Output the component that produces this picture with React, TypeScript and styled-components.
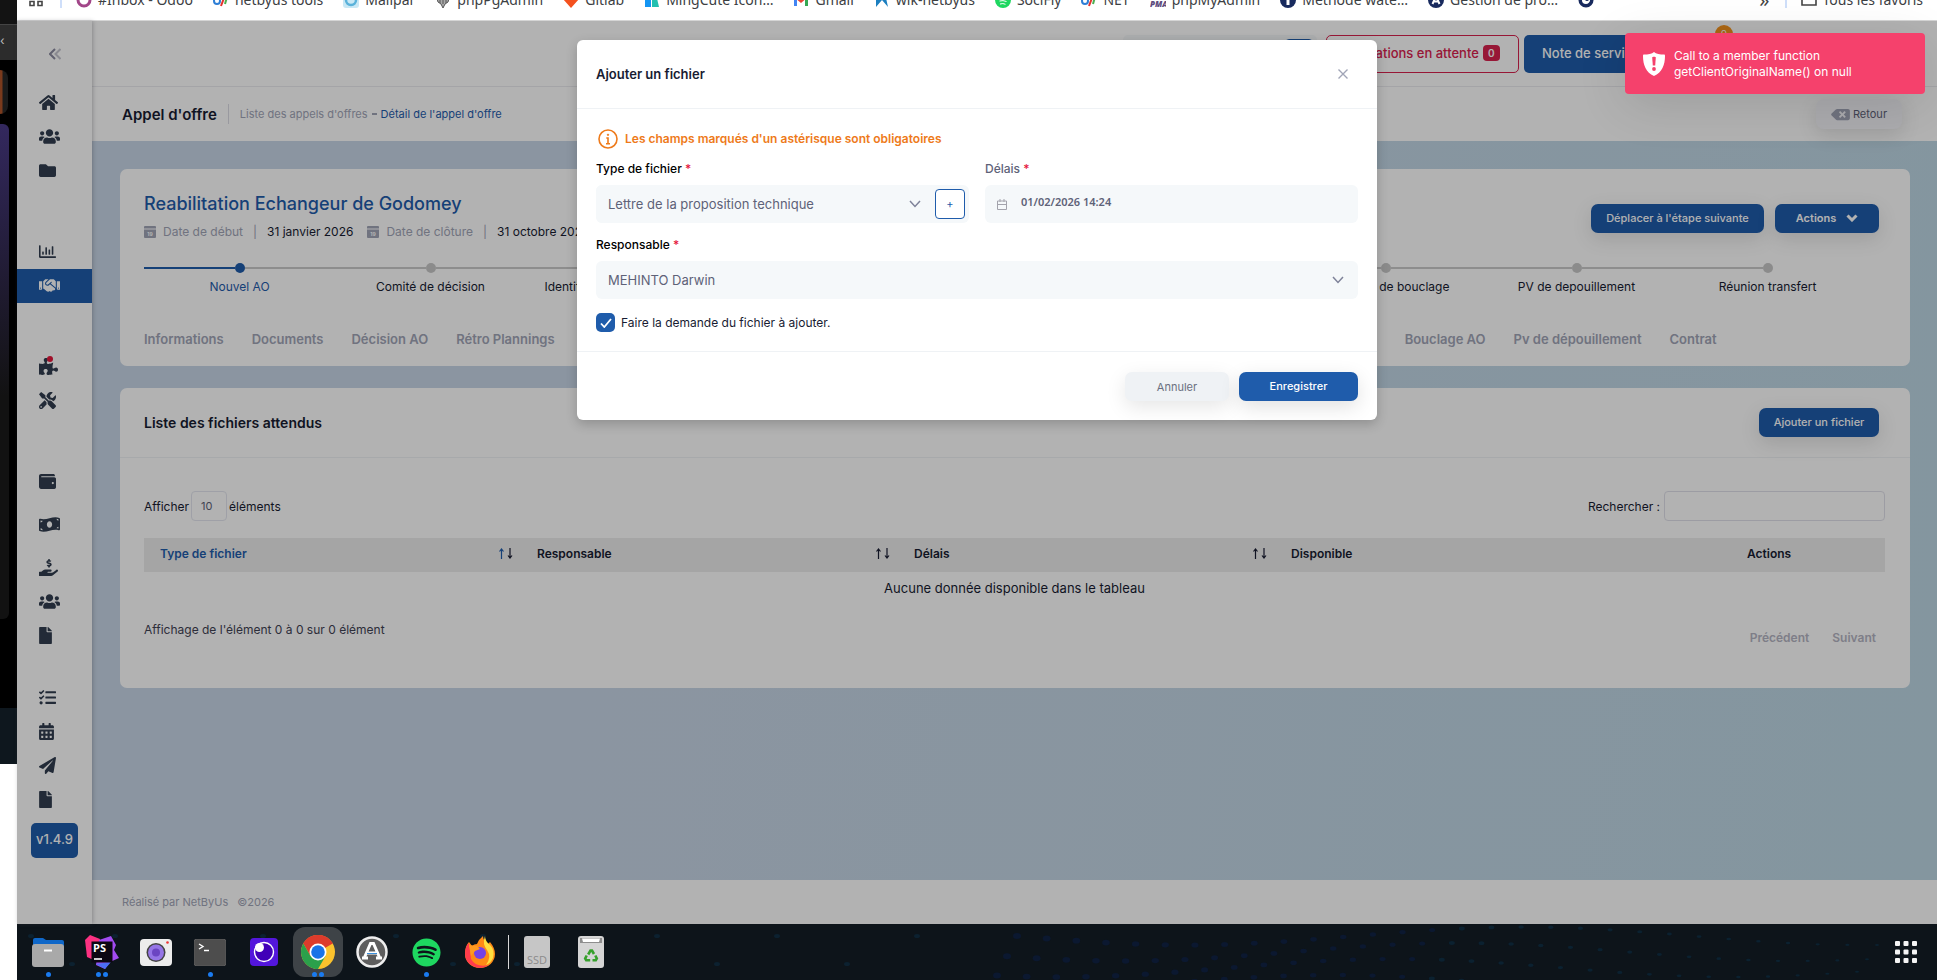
import React, { useState } from 'react'
import styled, { createGlobalStyle, css } from 'styled-components'
import {
  FaHome, FaUsers, FaFolder, FaRegChartBar, FaHandshake, FaPuzzlePiece, FaTools, FaWallet, FaMoneyBillWave,
  FaHandHoldingUsd, FaFile, FaTasks, FaCalendarAlt, FaPaperPlane, FaBackspace, FaSpotify
} from 'react-icons/fa'

const GlobalStyle = createGlobalStyle`
  * { box-sizing: border-box; }
  body {
    margin: 0;
    background: #fff;
    color: #181c32;
    font-family: Inter, 'Open Sans', sans-serif;
    font-size: 12px;
  }
  button, input, select { font-family: inherit; }
  svg { flex: none; display: block; }
`

const BLUE = '#1f5cab'

// w: icon width for a 17px height
const menu = [
  [
    { icon: FaHome, label: 'Accueil', w: 19 },
    { icon: FaUsers, label: 'Clients', w: 21 },
    { icon: FaFolder, label: 'Projets', w: 17 }
  ],
  [
    { icon: FaRegChartBar, label: 'Statistiques', w: 17 },
    { icon: FaHandshake, label: "Appels d'offres", w: 21, active: true }
  ],
  [
    { icon: FaPuzzlePiece, label: 'Modules', w: 19, alert: true },
    { icon: FaTools, label: 'Outils', w: 17 }
  ],
  [
    { icon: FaWallet, label: 'Caisse', w: 17 },
    { icon: FaMoneyBillWave, label: 'Paiements', w: 21, tall: true },
    { icon: FaHandHoldingUsd, label: 'Prêts', w: 19 },
    { icon: FaUsers, label: 'Personnel', w: 21 },
    { icon: FaFile, label: 'Rapports', w: 13 }
  ],
  [
    { icon: FaTasks, label: 'Tâches', w: 17 },
    { icon: FaCalendarAlt, label: 'Agenda', w: 15 },
    { icon: FaPaperPlane, label: 'Missions', w: 17 },
    { icon: FaFile, label: 'Fichiers', w: 13 }
  ]
]

const steps = [
  'Nouvel AO', 'Comité de décision', 'Identification des membres', 'Rétro planning', 'Elaboration', 'Vérification',
  'Demande de bouclage', 'PV de depouillement', 'Réunion transfert'
]

const leftTabs = ['Informations', 'Documents', 'Décision AO', 'Rétro Plannings']
const rightTabs = ['Bouclage AO', 'Pv de dépouillement', 'Contrat']

const bookmarks = [
  { name: '#Inbox - Odoo', icon: 'odoo' }, { name: 'netbyus tools', icon: 'net' }, { name: 'Mailpar', icon: 'mail' },
  { name: 'phpPgAdmin', icon: 'pg' }, { name: 'Gitlab', icon: 'gitlab' }, { name: 'MingCute Icon…', icon: 'ming' },
  { name: 'Gmail', icon: 'gmail' }, { name: 'wik-netbyus', icon: 'wik' }, { name: 'SociFly', icon: 'soci' },
  { name: 'NET', icon: 'net' }, { name: 'phpMyAdmin', icon: 'pma' }, { name: 'Méthode wate…', icon: 'navy' },
  { name: 'Gestion de pro…', icon: 'navyA' }, { name: '', icon: 'navyC' }
]

export default function App(): React.ReactElement {
  const [checked, setChecked] = useState(true)

  return (
    <Desktop>
      <GlobalStyle />
      <BackWindow>
        <BackTop />
        <BackTab>‹</BackTab>
        <BackBody>
          <Avatar />
          <Artwork />
        </BackBody>
        <BackBottom />
        <BackBlank />
      </BackWindow>

      <Front>
        <Bookmarks>
          <Favicon name="apps" />
          <BarRule />
          {bookmarks.map((b, i) => (
            <Bookmark key={i} href="#"><Favicon name={b.icon} />{b.name}</Bookmark>
          ))}
          <More>»</More>
          <BarRule />
          <Bookmark href="#"><Favicon name="folder" />Tous les favoris</Bookmark>
        </Bookmarks>

        <Viewport>
          <Sidebar>
            <Collapse aria-label="Réduire le menu">
              <svg width="12" height="12" viewBox="0 0 12 12" fill="none" stroke="#8a8aa0" strokeWidth="2">
                <path d="M6 1 1 6l5 5" />
                <path d="M11.500 1l-5 5 5 5" opacity=".5" />
              </svg>
            </Collapse>
            {menu.map((group, i) => (
              <MenuGroup key={i} $first={i === 0} $close={i === 4}>
                {group.map((item: any) => (
                  <MenuLink
                    key={item.label}
                    href="#"
                    aria-label={item.label}
                    $icon={item.w}
                    $active={item.active}
                    $tall={item.tall}
                  >
                    <item.icon />
                    {item.alert && <AlertDot />}
                  </MenuLink>
                ))}
              </MenuGroup>
            ))}
            <Version>v1.4.9</Version>
          </Sidebar>

          <Page>
            <TopBar>
              <SearchBox><SearchButton aria-label="Rechercher" /></SearchBox>
              <PendingButton>Validations en attente <Count>0</Count></PendingButton>
              <NoteButton>Note de service</NoteButton>
              <Notif>0</Notif>
            </TopBar>
            <SubBar>
              <PageTitle>Appel d'offre</PageTitle>
              <TitleRule />
              <Crumb href="#">Liste des appels d'offres</Crumb>
              <CrumbDash />
              <Crumb href="#" $current>Détail de l'appel d'offre</Crumb>
              <BackButton><FaBackspace />Retour</BackButton>
            </SubBar>

            <Content>
              <Card>
                <OfferHead>
                  <div>
                    <OfferTitle>Reabilitation Echangeur de Godomey</OfferTitle>
                    <Dates>
                      <DayIcon /><span>Date de début</span><i>|</i><b>31 janvier 2026</b>
                      <DayIcon /><span>Date de clôture</span><i>|</i><b>31 octobre 2026</b>
                    </Dates>
                  </div>
                  <Actions>
                    <PrimaryButton $width={173}>Déplacer à l'étape suivante</PrimaryButton>
                    <PrimaryButton $width={104} $bold>
                      Actions
                      <svg width="12" height="8" viewBox="0 0 12 8" fill="none" stroke="#fff" strokeWidth="3">
                        <path d="M1.500 1.500 6 6l4.500-4.500" />
                      </svg>
                    </PrimaryButton>
                  </Actions>
                </OfferHead>
                <Steps>
                  {steps.map((s, i) => (
                    <Step key={s} $active={i === 0}>
                      <Marker>
                        <Segment $active={i === 0} />
                        <Dot $active={i === 0} />
                        <Segment $hidden={i === steps.length - 1} />
                      </Marker>
                      {s}
                    </Step>
                  ))}
                </Steps>
                <Tabs>
                  {leftTabs.map(t => <Tab key={t} href="#">{t}</Tab>)}
                  <TabGroup>
                    <Tab href="#">Offre technique</Tab>
                    <Tab href="#">Offre financière</Tab>
                  </TabGroup>
                  {rightTabs.map(t => <Tab key={t} href="#">{t}</Tab>)}
                </Tabs>
              </Card>

              <Card>
                <ListHead>
                  <ListTitle>Liste des fichiers attendus</ListTitle>
                  <PrimaryButton $width={120}>Ajouter un fichier</PrimaryButton>
                </ListHead>
                <ListBody>
                  <Controls>
                    <label>
                      Afficher
                      <LengthSelect defaultValue="10"><option>10</option><option>25</option></LengthSelect>
                      éléments
                    </label>
                    <label>Rechercher :<SearchInput type="search" /></label>
                  </Controls>
                  <Table>
                    <colgroup>
                      <col width="377" /><col width="377" /><col width="377" /><col width="456" /><col />
                    </colgroup>
                    <thead>
                      <tr>
                        {['Type de fichier', 'Responsable', 'Délais', 'Disponible', 'Actions'].map((h, i) => (
                          <Th key={h} $sorted={i === 0}>
                            <ThInner>
                              {h}
                              {i < 3 && <SortArrows />}
                            </ThInner>
                          </Th>
                        ))}
                      </tr>
                    </thead>
                    <tbody>
                      <tr><Empty colSpan={5}>Aucune donnée disponible dans le tableau</Empty></tr>
                    </tbody>
                  </Table>
                  <ListFoot>
                    <span>Affichage de l'élément 0 à 0 sur 0 élément</span>
                    <Pager><button disabled>Précédent</button><button disabled>Suivant</button></Pager>
                  </ListFoot>
                </ListBody>
              </Card>
            </Content>

            <Footer><span>Réalisé par NetByUs</span><span>©2026</span></Footer>
          </Page>

          <Backdrop>
            <Modal role="dialog" aria-labelledby="modal-title">
              <ModalHead>
                <ModalTitle id="modal-title">Ajouter un fichier</ModalTitle>
                <Close aria-label="Fermer">
                  <svg width="10" height="10" viewBox="0 0 10 10" stroke="#a1a5b7" strokeWidth="1.400">
                    <path d="M.5.5l9 9M9.500.5l-9 9" />
                  </svg>
                </Close>
              </ModalHead>
              <ModalBody>
                <Notice>
                  <svg width="20" height="20" viewBox="0 0 20 20" fill="none" stroke="#ee7a1a" strokeWidth="1.600">
                    <circle cx="10" cy="10" r="9" />
                    <circle cx="10" cy="5.800" r=".7" fill="#ee7a1a" strokeWidth="1" />
                    <path d="M8.300 9H10v5.500M8 14.800h4" />
                  </svg>
                  Les champs marqués d'un astérisque sont obligatoires
                </Notice>
                <Columns>
                  <div>
                    <Label htmlFor="type">Type de fichier <Star>*</Star></Label>
                    <InputGroup>
                      <Field>
                        <Select id="type"><option>Lettre de la proposition technique</option></Select>
                        <Chevron />
                      </Field>
                      <AddButton aria-label="Ajouter un type">+</AddButton>
                    </InputGroup>
                  </div>
                  <div>
                    <Label htmlFor="delai" $muted>Délais <Star>*</Star></Label>
                    <Field>
                      <svg width="10" height="11" viewBox="0 0 10 11" fill="none" stroke="#a3a3ac">
                        <path d="M.5 2h9v8.500h-9zM.5 5.500h9M3 0v3M7 0v3" />
                      </svg>
                      <DateInput id="delai" type="text" defaultValue="01/02/2026 14:24" />
                    </Field>
                  </div>
                </Columns>
                <Label htmlFor="resp">Responsable <Star>*</Star></Label>
                <Field>
                  <Select id="resp"><option>MEHINTO Darwin</option></Select>
                  <Chevron />
                </Field>
                <CheckLabel>
                  <CheckStack>
                    <CheckBox type="checkbox" checked={checked} onChange={e => setChecked(e.target.checked)} />
                    <svg width="12" height="10" viewBox="0 0 12 10" fill="none" stroke="#fff" strokeWidth="1.800">
                      <path d="M1 5.500 4.300 9 11 1" />
                    </svg>
                  </CheckStack>
                  Faire la demande du fichier à ajouter.
                </CheckLabel>
              </ModalBody>
              <ModalFoot>
                <CancelButton>Annuler</CancelButton>
                <PrimaryButton $width={119}>Enregistrer</PrimaryButton>
              </ModalFoot>
            </Modal>
          </Backdrop>

          <Toast role="alert">
            <svg width="22" height="24" viewBox="0 0 22 24">
              <path
                fill="#fff"
                d="M11 0c2 2 6 2.500 10 2.500.9 0 1 .6 1 1.500 0 9-3 16.500-11 20C3 20.500 0 13 0 4c0-.9.1-1.500 1-1.500C5 2.500 9 2 11 0z"
              />
              <path fill="#f5416c" d="M9.200 5.500c0-1 3.600-1 3.600 0l-.6 8h-2.400z" />
              <circle cx="11" cy="17" r="1.900" fill="#f5416c" />
            </svg>
            <span>Call to a member function getClientOriginalName() on null</span>
          </Toast>
        </Viewport>

        <Dock>
          <DockDots />
          {dockApps.map(app => (
            <DockItem key={app.name} aria-label={app.name} $active={app.name === 'Chrome'}>
              {app.icon}
              <Running>{Array.from({ length: app.running }, (_, i) => <i key={i} />)}</Running>
            </DockItem>
          ))}
          <DockRule />
          <DockItem aria-label="SSD">
            <svg width="26" height="32" viewBox="0 0 26 32">
              <rect width="26" height="32" rx="3" fill="#c6c6c6" />
              <text x="13" y="28" textAnchor="middle" fontSize="11" fill="#8b8b8b" fontFamily="Open Sans">SSD</text>
            </svg>
          </DockItem>
          <DockItem aria-label="Corbeille">
            <svg width="26" height="32" viewBox="0 0 26 32">
              <rect width="26" height="32" rx="3" fill="#d5d5d5" />
              <path d="M2 2h22v5H2z" fill="#8e8e8e" />
              <path d="M4 2.500h18l-1 3.500H5z" fill="#fff" />
              <g fill="none" stroke="#36a02c" strokeWidth="2.600">
                <path d="M10.200 18.500l2.300-4h1.500l2 3.500" />
                <path d="M17.300 19.500l1.500 3-1 1.700h-3.300" />
                <path d="M8.700 19.500l-1.500 3 1 1.700h4" />
              </g>
            </svg>
          </DockItem>
          <AppsButton aria-label="Applications">
            <svg width="22" height="22" viewBox="0 0 22 22" fill="#f4f4f4">
              {[0, 1, 2].map(r => [0, 1, 2].map(c => (
                <rect key={`${r}${c}`} x={c * 8.5} y={r * 8.5} width="5" height="5" rx="1" />
              )))}
            </svg>
          </AppsButton>
        </Dock>
      </Front>
    </Desktop>
  )
}

function Chevron() {
  return (
    <svg width="12" height="8" viewBox="0 0 12 8" fill="none" stroke="#7e8299" strokeWidth="1.500">
      <path d="M1 1l5 5.500L11 1" />
    </svg>
  )
}

function DayIcon() {
  return (
    <svg width="12" height="12" viewBox="0 0 12 12" fill="#a1a5b7">
      <path d="M1 0h10q1 0 1 1v1.500H0V1q0-1 1-1zM0 3.500h12V11q0 1-1 1H1q-1 0-1-1z" />
      <text x="6" y="9.500" fontSize="5" fontWeight="700" textAnchor="middle" fill="#fff">19</text>
    </svg>
  )
}

function SortArrows() {
  return (
    <svg width="14" height="11" viewBox="0 0 14 11" fill="none" stroke="currentColor" strokeWidth="1.200">
      <path d="M2.500 11V1.500M.5 3.500l2-2.500 2 2.500" />
      <path d="M11 0v9.500M9 7.500l2 2.500 2-2.500" stroke="#181c32" />
    </svg>
  )
}

function Favicon({ name }: { name: string }) {
  const shapes: Record<string, React.ReactNode> = {
    apps: <path d="M1 1h4v4H1zM9 1h4v4H9zM1 9.500h4v4H1zM9 9.500h4v4H9z" fill="none" stroke="#444" strokeWidth="1.600" />,
    odoo: <circle cx="8" cy="8" r="6" fill="none" stroke="#a24689" strokeWidth="3" />,
    net: (
      <g fill="none" strokeWidth="2">
        <path d="M1 9a3 3 0 106 0 3 3 0 10-6 0M8 6h3" stroke="#2f7fd6" />
        <path d="M8 14l3-8" stroke="#e5322d" /><path d="M12 12l2-7" stroke="#4caf50" />
      </g>
    ),
    mail: (
      <g>
        <rect width="16" height="16" rx="3" fill="#c9e8f5" />
        <circle cx="8" cy="8" r="5" fill="none" stroke="#5ab2da" strokeWidth="2.500" />
      </g>
    ),
    pg: <path d="M1 3h14l-2 7-3 2-2 4-2-4-3-2z M5 4v7M8 4v8M11 4v7" fill="#aaa" stroke="#555" />,
    gitlab: <path d="M0 7l2-6 2 5h8l2-5 2 6-8 9z" fill="#f4511e" />,
    ming: <g><path d="M1 15V4l6 3v8z" fill="#1495f3" /><path d="M8 15V7l4-5 3 13z" fill="#22c0b0" /></g>,
    gmail: (
      <g fill="none" strokeWidth="3">
        <path d="M2.500 14V3" stroke="#4285f4" /><path d="M2 4l6 5 6-5" stroke="#ea4335" />
        <path d="M13.500 14V3" stroke="#34a853" />
      </g>
    ),
    wik: <path d="M2 15l6-7 6 7-2-9-10-1z" fill="#1c7fc0" />,
    soci: (
      <g>
        <circle cx="8" cy="8" r="8" fill="#1ed760" />
        <path d="M4 6q4-1.500 8 .5M4.500 9q3.500-1 7 .5M5 12q3-1 5.500.3" stroke="#fff" fill="none" />
      </g>
    ),
    pma: (
      <g>
        <path d="M2 8l3-4 2 4zM9 8l2-5 3 5z" fill="#f89c0e" />
        <text x="0" y="15" fontSize="8" fontWeight="900" fontStyle="italic" fill="#5c4a7d" fontFamily="Open Sans">
          PMA
        </text>
      </g>
    ),
    navy: <g><circle cx="8" cy="8" r="8" fill="#182a5e" /><path d="M8 5v8" stroke="#fff" strokeWidth="3" /></g>,
    navyA: (
      <g>
        <circle cx="8" cy="8" r="8" fill="#182a5e" />
        <path d="M4.500 12L8 4l3.500 8M6 9.500h4" stroke="#fff" strokeWidth="2" fill="none" />
      </g>
    ),
    navyC: (
      <g>
        <circle cx="8" cy="8" r="5.800" fill="none" stroke="#182a5e" strokeWidth="3.500" />
        <circle cx="9" cy="7" r="2" fill="#182a5e" />
      </g>
    ),
    folder: <path d="M1 3h6l1 2h7v8H1z" fill="none" stroke="#444" strokeWidth="1.600" />
  }
  return <svg width="16" height="16" viewBox="0 0 16 16">{shapes[name]}</svg>
}

// Wallpaper pattern that shows through the dock
function DockDots() {
  const rows = []
  for (let r = 0; r < 4; r++) {
    for (let i = 0; i < 30; i++) {
      const t = i / 29
      rows.push(
        <ellipse
          key={`${r}-${i}`}
          cx={1000 + t * 860 - r * 10}
          cy={12 + r * 16 + Math.sin(t * 8 + r * 0.5) * 9}
          rx={4 - t * 2}
          ry={3 - t * 2}
          fill={t < 0.5 ? '#0b1830' : '#0b2130'}
        />
      )
    }
  }
  return (
    <Dots viewBox="0 0 1920 56" preserveAspectRatio="xMinYMin slice" aria-hidden>
      {rows}
      {[14, 55, 98, 188, 246, 318, 379, 436, 466, 500, 640, 700, 760, 830, 900].map((x, i) => (
        <ellipse key={x} cx={x} cy={i % 2 ? 40 : 12} rx="3" ry="2" fill="#0c2130" />
      ))}
    </Dots>
  )
}

const dockApps = [
  {
    name: 'Fichiers',
    running: 1,
    icon: (
      <svg width="32" height="30" viewBox="0 0 32 30">
        <path d="M1 3q0-2 2-2h8l3 2h16q2 0 2 2v8H1z" fill="#0f67c8" />
        <rect y="7" width="32" height="23" rx="3" fill="#a9a9a9" />
        <path d="M12 13.500h8" stroke="#fff" strokeWidth="2" />
      </svg>
    )
  },
  {
    name: 'PhpStorm',
    running: 2,
    icon: (
      <svg width="34" height="34" viewBox="0 0 34 34">
        <path d="M0 5L5 0l10 4-4 22-9-4z" fill="#fc3181" />
        <path d="M14 5l12-4 5 9-2 5 5 8-9 4-5 7-9-4z" fill="#a24bf0" />
        <path d="M11 29l9 5 6-7z" fill="#4c6ef5" />
        <rect x="6.500" y="6.500" width="21" height="21" fill="#0c0712" />
        <text x="8" y="17" fontSize="11" fontWeight="700" fill="#fff" fontFamily="Open Sans">PS</text>
        <path d="M9 24h8" stroke="#fff" strokeWidth="1.600" />
      </svg>
    )
  },
  {
    name: 'Capture',
    running: 0,
    icon: (
      <svg width="32" height="27" viewBox="0 0 32 27">
        <rect width="32" height="27" rx="4" fill="#ececec" />
        <circle cx="16" cy="13.500" r="9.500" fill="#444" />
        <circle cx="16" cy="13.500" r="8" fill="#9575e6" />
        <circle cx="16" cy="13.500" r="4" fill="#6b45c2" />
        <circle cx="27.500" cy="3.500" r="1.300" fill="#e33" />
      </svg>
    )
  },
  {
    name: 'Terminal',
    running: 1,
    icon: (
      <svg width="32" height="27" viewBox="0 0 32 27">
        <rect width="32" height="27" rx="3" fill="#4d4d4d" stroke="#5c5c5c" />
        <path d="M5 5l4 2.500L5 10M10 11.500h5" fill="none" stroke="#fff" strokeWidth="1.400" />
      </svg>
    )
  },
  {
    name: 'Insomnia',
    running: 0,
    icon: (
      <svg width="28" height="28" viewBox="0 0 28 28">
        <rect width="28" height="28" rx="4" fill="#5316dc" />
        <circle cx="14" cy="14" r="9.500" fill="#4100b8" stroke="#fff" strokeWidth="1.400" />
        <circle cx="9.500" cy="9.500" r="4.500" fill="#fff" />
      </svg>
    )
  },
  {
    name: 'Chrome',
    running: 2,
    icon: (
      <svg width="34" height="34" viewBox="0 0 34 34">
        <circle cx="17" cy="17" r="17" fill="#fbc22d" />
        <path d="M17 17L2.300 8.500A17 17 0 0131.700 8.500z" fill="#dd3b2c" />
        <path d="M17 8.500h14.700A17 17 0 002.300 8.500L9.600 21.300z" fill="#dd3b2c" />
        <path d="M2.300 8.500A17 17 0 0017 34l7.400-12.700H9.600z" fill="#2ba04b" />
        <circle cx="17" cy="17" r="8.500" fill="#fff" />
        <circle cx="17" cy="17" r="6.800" fill="#1a73e8" />
      </svg>
    )
  },
  {
    name: 'AppImage',
    running: 0,
    icon: (
      <svg width="32" height="32" viewBox="0 0 32 32" fill="none">
        <circle cx="16" cy="16" r="14.500" fill="#5e5e5e" stroke="#eee" strokeWidth="2.500" />
        <path d="M8 22.500L14.500 7.500h3L24 22.500M6 22h6M20 22h6M10 17h12" stroke="#fff" strokeWidth="3" />
        <path d="M11 17.500h10" stroke="#3a8fdc" />
      </svg>
    )
  },
  { name: 'Spotify', running: 1, icon: <FaSpotify size={29} color="#1ed760" /> },
  {
    name: 'Firefox',
    running: 0,
    icon: (
      <svg width="30" height="32" viewBox="0 0 30 32">
        <path
          d="M4 6l3 4q2-2 5-2 2-5 6-8 0 5 5 8l2-2q5 6 5 12a15 14 0 01-30 0Q0 10 4 6z"
          fill="#ff8a16"
        />
        <path d="M20 0q0 5 5 9 5 5 3 13-2 5-7 7 6-8 1-15-5-6-2-14z" fill="#ffdf3f" />
        <path d="M0 18a15 14 0 0024 11q-13 3-18-6L4 7Q0 10 0 18z" fill="#ff3b4c" />
        <circle cx="15" cy="17" r="6" fill="#7542e5" />
        <path d="M4 9l8 1 3 3-5 2-4 5z" fill="#ff9a1f" />
      </svg>
    )
  }
]

/* ---- desktop ---- */

const Desktop = styled.div`
  display: flex;
  min-height: 100vh;
`

const BackWindow = styled.div`
  width: 17px;
  flex: none;
  display: flex;
  flex-direction: column;
  background: #000;
  overflow: hidden;
`

const BackTop = styled.div`
  height: 24px;
  background: #131313;
`

const BackTab = styled.div`
  height: 36px;
  background: #2c2c2c;
  border-top: 1px solid #444;
  color: #bbb;
  line-height: 32px;
`

const BackBody = styled.div`
  height: 648px;
  padding-top: 10px;
`

const Avatar = styled.div`
  width: 8px;
  height: 44px;
  border-radius: 0 22px 22px 0;
  background: linear-gradient(to right, #7a3a1c 2px, #1b1b1b 3px);
`

const Artwork = styled.div`
  width: 9px;
  height: 495px;
  margin-top: 10px;
  border-radius: 0 6px 6px 0;
  background: linear-gradient(#33285e, #121212 55%);
`

const BackBottom = styled.div`
  height: 56px;
  background: #0e171e;
`

const BackBlank = styled.div`
  flex: 1;
  background: #fff;
`

const Front = styled.div`
  flex: 1;
  min-width: 0;
  display: flex;
  flex-direction: column;
`

const Bookmarks = styled.nav`
  height: 21px;
  display: flex;
  align-items: flex-start;
  gap: 20px;
  padding: 0 14px 0 12px;
  border-bottom: 1px solid #d5d5d5;
  overflow: hidden;
  svg { margin-top: -8px; }
`

const Bookmark = styled.a`
  display: flex;
  gap: 6px;
  color: #3c4043;
  font: 14px/0 'Noto Sans', sans-serif;
  white-space: nowrap;
  text-decoration: none;
`

const BarRule = styled.span`
  width: 2px;
  height: 8px;
  margin: 0 -6px 0 -5px;
  background: #cfdffa;
`

const More = styled.span`
  margin-left: auto;
  font: 20px/0 'Noto Sans', sans-serif;
  color: #444;
`

/* ---- page shell ---- */

const Viewport = styled.div`
  position: relative;
  flex: 1;
  display: flex;
`

const Sidebar = styled.aside`
  width: 75px;
  flex: none;
  background: #fff;
  box-shadow: 1px 0 4px rgba(60, 60, 70, 0.3);
  z-index: 1;
`

const Collapse = styled.button`
  display: flex;
  align-items: center;
  justify-content: center;
  width: 100%;
  height: 65px;
  border: 0;
  background: none;
`

const MenuGroup = styled.div<{ $first?: boolean; $close?: boolean }>`
  margin-top: ${p => (p.$first ? 0 : p.$close ? 28 : 47)}px;
`

const MenuLink = styled.a<{ $icon: number; $active?: boolean; $tall?: boolean }>`
  display: flex;
  align-items: center;
  height: ${p => (p.$tall ? 52 : 34)}px;
  padding: 0 0 2px 22px;
  color: ${p => (p.$active ? '#fff' : '#313d4f')};
  background: ${p => (p.$active ? BLUE : 'none')};
  position: relative;
  svg { height: 17px; width: ${p => p.$icon}px; }
`

const AlertDot = styled.span`
  position: absolute;
  left: 30px;
  top: 6px;
  width: 6px;
  height: 6px;
  border-radius: 50%;
  background: #e5173c;
`

const Version = styled.div`
  width: 47px;
  height: 35px;
  margin: 6px 0 0 14px;
  border-radius: 5px;
  background: ${BLUE};
  color: #fff;
  font-size: 13px;
  font-weight: 500;
  line-height: 33px;
  text-align: center;
`

const Page = styled.div`
  flex: 1;
  min-width: 0;
  display: flex;
  flex-direction: column;
  background: linear-gradient(100deg, #c8d6e7 30%, #bdd7e4);
`

const TopBar = styled.header`
  display: flex;
  align-items: center;
  justify-content: flex-end;
  gap: 5px;
  height: 66px;
  padding-right: 204px;
  background: #fff;
  border-bottom: 1px solid #ebebf0;
`

const SearchBox = styled.div`
  display: flex;
  justify-content: flex-end;
  width: 194px;
  height: 38px;
  margin-right: 4px;
  padding: 4px;
  border-radius: 5px;
  background: #f5f8fa;
`

const SearchButton = styled.button`
  width: 28px;
  border: 1px solid ${BLUE};
  border-radius: 4px;
  background: #fff;
`

const topButton = css`
  display: flex;
  align-items: center;
  justify-content: center;
  gap: 4px;
  height: 38px;
  padding-bottom: 3px;
  border-radius: 5px;
  font-size: 13px;
  font-weight: 500;
  white-space: nowrap;
`

const PendingButton = styled.button`
  ${topButton}
  width: 193px;
  border: 1px solid #d9214e;
  color: #d9214e;
  background: #fff;
`

const Count = styled.span`
  width: 17px;
  border-radius: 4px;
  background: #d9214e;
  color: #fff;
  font-size: 10px;
  font-weight: 600;
  line-height: 16px;
`

const NoteButton = styled.button`
  ${topButton}
  width: 134px;
  border: 0;
  color: #fff;
  background: ${BLUE};
`

const Notif = styled.span`
  align-self: flex-start;
  width: 18px;
  height: 18px;
  margin: 4px 0 0 52px;
  border-radius: 50%;
  background: #f7941d;
  color: #fff;
  font-size: 10px;
  line-height: 18px;
  text-align: center;
`

const SubBar = styled.div`
  display: flex;
  align-items: center;
  height: 54px;
  padding: 0 35px 0 30px;
  background: #fff;
`

const PageTitle = styled.h1`
  margin: 0;
  font-size: 15px;
  font-weight: 600;
`

const TitleRule = styled.span`
  width: 1px;
  height: 20px;
  margin: 0 11px;
  background: #dcdce4;
`

const Crumb = styled.a<{ $current?: boolean }>`
  color: ${p => (p.$current ? BLUE : '#a1a5b7')};
  font-size: 11px;
  text-decoration: none;
`

const CrumbDash = styled.span`
  width: 5px;
  height: 2px;
  margin: 0 4px;
  background: #a1a5b7;
`

const BackButton = styled.button`
  display: flex;
  align-items: center;
  justify-content: center;
  gap: 3px;
  width: 86px;
  height: 30px;
  margin-left: auto;
  border: 0;
  border-radius: 8px;
  background: #f5f5fa;
  box-shadow: 0 6px 20px rgba(0, 0, 0, 0.12);
  color: #5e6278;
  font-size: 11px;
  svg { height: 15px; width: 19px; color: #a1a5b7; }
`

const Content = styled.main`
  flex: 1;
  display: flex;
  flex-direction: column;
  gap: 22px;
  padding: 28px 27px 28px 28px;
`

const Card = styled.section`
  border-radius: 7px;
  background: #fff;
`

const Footer = styled.footer`
  display: flex;
  gap: 9px;
  padding-left: 30px;
  background: #fff;
  color: #a1a5b7;
  font-size: 11px;
  line-height: 44px;
`

/* ---- offer card ---- */

const OfferHead = styled.div`
  display: flex;
  align-items: center;
  justify-content: space-between;
  padding: 23px 31px 0 24px;
`

const OfferTitle = styled.h2`
  margin: 0 0 4px;
  color: ${BLUE};
  font-size: 18px;
  font-weight: 500;
  line-height: 24px;
`

const Dates = styled.div`
  display: flex;
  align-items: center;
  color: #a1a5b7;
  font-size: 12px;
  line-height: 24px;
  svg { margin-right: 7px; }
  i { margin: 0 10px; font-style: normal; }
  b { margin-right: 14px; color: #181c32; font-weight: 400; }
`

const Actions = styled.div`
  display: flex;
  gap: 11px;
`

const PrimaryButton = styled.button<{ $width: number; $bold?: boolean }>`
  display: flex;
  align-items: center;
  justify-content: center;
  gap: 10px;
  width: ${p => p.$width}px;
  height: 29px;
  padding: 0 0 1px;
  border: 0;
  border-radius: 7px;
  background: ${BLUE};
  box-shadow: 0 6px 20px rgba(0, 0, 0, 0.12);
  color: #fff;
  font-size: 11px;
  font-weight: ${p => (p.$bold ? 600 : 500)};
  white-space: nowrap;
`

const Steps = styled.div`
  display: flex;
  padding: 19px 47px 0 24px;
`

const Step = styled.div<{ $active?: boolean }>`
  flex: 1 1 0;
  min-width: 0;
  color: ${p => (p.$active ? BLUE : '#181c32')};
  font-size: 12px;
  line-height: 18px;
  text-align: center;
  white-space: nowrap;
`

const Marker = styled.div`
  display: flex;
  align-items: center;
  margin-bottom: 5px;
`

const Segment = styled.span<{ $active?: boolean; $hidden?: boolean }>`
  flex: 1;
  height: 2px;
  background: ${p => (p.$hidden ? 'none' : p.$active ? BLUE : '#cacaca')};
`

const Dot = styled.span<{ $active?: boolean }>`
  width: 10px;
  height: 10px;
  border-radius: 50%;
  background: ${p => (p.$active ? BLUE : '#c8c8c8')};
`

const Tabs = styled.nav`
  display: flex;
  gap: 28px;
  padding: 33px 24px 17px;
`

const Tab = styled.a`
  color: #a1a5b7;
  font-size: 13px;
  font-weight: 600;
  line-height: 20px;
  white-space: nowrap;
  text-decoration: none;
`

const TabGroup = styled.div`
  display: flex;
  justify-content: flex-end;
  gap: 28px;
  width: 794px;
`

/* ---- files list ---- */

const ListHead = styled.div`
  display: flex;
  align-items: center;
  justify-content: space-between;
  height: 70px;
  padding: 0 31px 0 24px;
  border-bottom: 1px solid #eff2f5;
`

const ListTitle = styled.h3`
  margin: 0;
  font-size: 14px;
  font-weight: 600;
`

const ListBody = styled.div`
  padding: 33px 25px 40px 24px;
`

const Controls = styled.div`
  display: flex;
  justify-content: space-between;
  margin-bottom: 17px;
  label { display: flex; align-items: center; gap: 2px; }
`

const LengthSelect = styled.select`
  width: 36px;
  height: 30px;
  padding: 0 9px;
  appearance: none;
  border: 1px solid #e4e6ef;
  border-radius: 4px;
  background: none;
  color: #5e6278;
  font-size: 11px;
`

const SearchInput = styled.input`
  width: 221px;
  height: 30px;
  margin-left: 2px;
  border: 1px solid #e0e0ea;
  border-radius: 4px;
  background: none;
`

const Table = styled.table`
  width: 100%;
  table-layout: fixed;
  border-collapse: collapse;
`

const Th = styled.th<{ $sorted?: boolean }>`
  height: 34px;
  padding: 0 8px 3px 16px;
  background: #ededed;
  color: ${p => (p.$sorted ? BLUE : '#181c32')};
  font-size: 12px;
  font-weight: 600;
  text-align: left;
`

const ThInner = styled.div`
  display: flex;
  align-items: center;
  justify-content: space-between;
`

const Empty = styled.td`
  height: 32px;
  padding: 0;
  font-size: 13px;
  text-align: center;
`

const ListFoot = styled.div`
  display: flex;
  justify-content: space-between;
  padding-top: 16px;
  color: #3f4254;
  font-size: 12px;
  line-height: 20px;
`

const Pager = styled.div`
  display: flex;
  gap: 23px;
  padding: 8px 9px 0 0;
  button {
    padding: 0;
    border: 0;
    background: none;
    color: #b5b5c3;
    font-size: 12px;
    font-weight: 600;
    line-height: 20px;
  }
`

/* ---- modal ---- */

const Backdrop = styled.div`
  position: absolute;
  inset: 0;
  z-index: 2;
  display: flex;
  align-items: flex-start;
  justify-content: center;
  padding-top: 19px;
  background: rgba(0, 0, 0, 0.3);
`

const Modal = styled.form`
  width: 800px;
  border-radius: 6px;
  background: #fff;
  box-shadow: 0 4px 12px rgba(0, 0, 0, 0.2);
`

const ModalHead = styled.div`
  display: flex;
  align-items: center;
  justify-content: space-between;
  height: 69px;
  padding: 0 29px 0 19px;
  border-bottom: 1px solid #eff2f5;
`

const ModalTitle = styled.h2`
  margin: 0;
  font-size: 13px;
  font-weight: 600;
`

const Close = styled.button`
  padding: 0;
  border: 0;
  background: none;
`

const ModalBody = styled.div`
  padding: 20px 19px 19px;
  border-bottom: 1px solid #eff2f5;
`

const Notice = styled.div`
  display: flex;
  align-items: center;
  gap: 7px;
  margin-bottom: 10px;
  padding-left: 2px;
  color: #ee7a1a;
  font-size: 12px;
  font-weight: 600;
  line-height: 20px;
`

const Columns = styled.div`
  display: grid;
  grid-template-columns: 1fr 1fr;
  gap: 16px;
  margin-bottom: 12px;
`

const Label = styled.label<{ $muted?: boolean }>`
  display: block;
  margin-bottom: 6px;
  color: ${p => (p.$muted ? '#5e6278' : '#000')};
  font-size: 12px;
  font-weight: 500;
  line-height: 20px;
`

const Star = styled.span`
  color: #e5173c;
`

const InputGroup = styled.div`
  display: flex;
  align-items: center;
  padding-right: 4px;
  border-radius: 6px;
  background: #f5f8fa;
`

const Field = styled.div`
  flex: 1;
  display: flex;
  align-items: center;
  height: 38px;
  padding: 0 14px 0 12px;
  border-radius: 6px;
  background: #f5f8fa;
`

const Select = styled.select`
  flex: 1;
  padding: 0;
  appearance: none;
  border: 0;
  background: none;
  color: #5e6278;
  font-size: 13px;
  outline: none;
`

const AddButton = styled.button`
  width: 30px;
  height: 30px;
  padding: 0;
  border: 1px solid ${BLUE};
  border-radius: 4px;
  background: #fff;
  color: ${BLUE};
  font-size: 11px;
`

const DateInput = styled.input`
  flex: 1;
  margin-left: 14px;
  padding: 0 0 6px;
  border: 0;
  background: none;
  color: #5e6278;
  font: 600 11px 'Noto Sans', sans-serif;
  outline: none;
`

const CheckLabel = styled.label`
  display: flex;
  align-items: center;
  gap: 6px;
  margin-top: 14px;
  font-size: 12px;
`

const CheckStack = styled.span`
  display: grid;
  place-items: center;
  > * { grid-area: 1 / 1; }
  svg { pointer-events: none; }
`

const CheckBox = styled.input`
  width: 19px;
  height: 19px;
  margin: 0;
  appearance: none;
  border-radius: 5px;
  background: #e4e6ef;
  &:checked { background: ${BLUE}; }
`

const ModalFoot = styled.div`
  display: flex;
  justify-content: flex-end;
  gap: 10px;
  padding: 20px 19px 19px;
`

const CancelButton = styled.button`
  width: 104px;
  height: 29px;
  border: 0;
  border-radius: 7px;
  background: #eff2f5;
  box-shadow: 0 6px 20px rgba(0, 0, 0, 0.1);
  color: #6b7080;
  font-size: 11px;
`

const Toast = styled.div`
  position: absolute;
  top: 12px;
  right: 12px;
  z-index: 3;
  display: flex;
  align-items: center;
  gap: 9px;
  width: 300px;
  height: 61px;
  padding: 0 60px 0 18px;
  border-radius: 4px;
  background: #f5416c;
  box-shadow: 0 10px 50px rgba(0, 0, 0, 0.12);
  color: #fff;
  font-size: 12px;
  line-height: 16px;
`

/* ---- dock ---- */

const Dock = styled.div`
  position: relative;
  display: flex;
  align-items: center;
  gap: 4px;
  height: 56px;
  padding: 0 20px 0 6px;
  background: #0d141a;
`

const Dots = styled.svg`
  position: absolute;
  inset: 0;
  width: 100%;
  height: 100%;
`

const DockItem = styled.button<{ $active?: boolean }>`
  position: relative;
  display: flex;
  align-items: center;
  justify-content: center;
  width: 50px;
  height: 50px;
  padding: 0;
  border: 0;
  border-radius: 12px;
  background: ${p => (p.$active ? '#3e4347' : 'none')};
`

const Running = styled.span`
  position: absolute;
  bottom: 0;
  left: 0;
  right: 0;
  display: flex;
  justify-content: center;
  gap: 2px;
  i { width: 5px; height: 5px; border-radius: 50%; background: #1a7bf0; }
`

const DockRule = styled.span`
  position: relative;
  width: 1px;
  height: 34px;
  margin: 0 -1px;
  background: #d8d8d8;
`

const AppsButton = styled.button`
  position: relative;
  margin-left: auto;
  padding: 0;
  border: 0;
  background: none;
`
